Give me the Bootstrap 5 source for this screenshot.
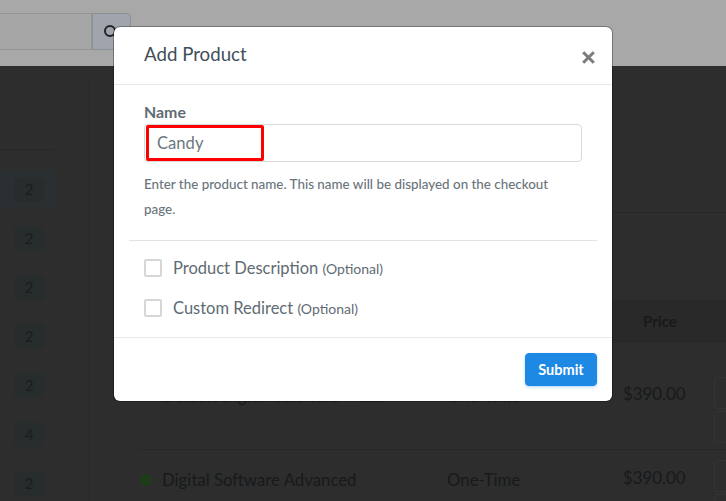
<!DOCTYPE html>
<html lang="en">
<head>
<meta charset="utf-8">
<title>Add Product</title>
<link href="https://cdn.jsdelivr.net/npm/bootstrap@5.3.0/dist/css/bootstrap.min.css" rel="stylesheet">
<style>
html, body { height: 501px; overflow: hidden; }
body { background: #2d2d2d; font-family: "Lato", "Open Sans", sans-serif; color: #171a1c; position: relative; }
.topbar { height: 66px; background: #a8a8a8; padding-top: 13px; }
.topsearch { width: 131px; height: 37px; }
.topfield { flex: 1; border: 1px solid #959595; border-left: 0; background: #a6a6a6; }
.topbtn { width: 39px; border: 1px solid #8b8f96; border-radius: 0 4px 4px 0; background: #a0a4ad; padding: 11px 0 0 11px; }
.shell { height: 435px; }
.side { width: 90px; border-right: 1px solid #272727; padding-top: 69px; margin-top: 14px; height: 421px; flex: none; }
.siderule { width: 54px; border-top: 1px solid #272727; }
.siderow { width: 54px; height: 49px; padding: 7px 0 0 14px; margin-top: 0; }
.siderow.on { background: #2a3032; height: 39px; margin-top: 20px; padding-top: 7px; margin-bottom: 10px; }
.count { display: flex; align-items: center; justify-content: center; width: 30px; height: 25px; border-radius: 5px; background: #272c2d; color: #1a1d1f; font-size: 15px; }
.main { flex: 1; padding-top: 146px; min-width: 0; }
.mainrule { border-top: 1px solid #272727; margin-left: 520px; }
.thead { height: 43px; margin-top: 87px; margin-left: 50px; background: #292929; padding-left: 503px; display: flex; align-items: center; font-weight: 700; font-size: 15px; }
.prow { margin-left: 50px; height: 107px; border-bottom: 1px solid #272727; font-size: 16.8px; display: flex; position: relative; }
.prow.second { height: 60px; border: 0; }
.dotmark { width: 12px; height: 12px; border-radius: 50%; background: #1c3d18; flex: none; margin-right: 10px; }
.pname { width: 307px; flex: none; display: flex; align-items: center; white-space: nowrap; }
.ptype { width: 176px; flex: none; }
.pprice { width: 91px; flex: none; padding-bottom: 4px; }
.pbtns { display: flex; flex-direction: column; gap: 2px; padding-top: 34px; }
.second .pbtns { padding-top: 10px; }
.pbtns span { flex: none; width: 30px; height: 32px; border: 1px solid #343434; border-right: 0; border-radius: 4px 0 0 4px; }
.dialog { position: absolute; left: 114px; top: 27px; width: 498px; height: 374px; background: #fff; border-radius: 6px; border: 0; box-shadow: 0 0 0 1px rgba(0,0,0,.3); display: flex; flex-direction: column; color: #5f6b73; }
.dialog .modal-header { height: 58px; padding: 0 15px 0 30px; border-bottom: 1px solid #e9e9e9; flex: none; }
.dialog .modal-title { font-size: 18.7px; font-weight: 400; color: #3f4f59; line-height: 1; margin: 0 0 2px; }
.xclose { background: none; border: 0; padding: 0; margin: 3px 2px 0 0; line-height: 0; }
.dialog .modal-body { padding: 0 15px; flex: 1; }
.fieldname { display: block; font-size: 15.9px; font-weight: 700; color: #5f6b73; margin: 17px 0 2px 15px; line-height: 20px; }
.fieldwrap { margin-left: 15px; width: 438px; position: relative; }
.dialog .form-control { height: 38px; padding: 0 12px; background: #fff; border: 1px solid #d9d9d9; border-radius: 4px; font-size: 16.6px; color: #6c7780; box-shadow: none; font-family: inherit; }
.redbox { position: absolute; left: 2px; top: 1px; width: 118px; height: 36px; border: 3px solid #f00; border-radius: 2px; pointer-events: none; }
.fieldhelp { font-size: 13.4px; line-height: 25px; margin: 10px 0 18px 15px; color: #6a747b; width: 420px; font-weight: 500; }
.fieldline { margin: 0; border: 0; border-top: 1px solid #e3e3e3; opacity: 1; }
.optrow { display: flex; align-items: center; margin: 0 0 0 15px; height: 18px; gap: 11px; font-size: 16.5px; color: #5f6b73; }
.fieldline + .optrow { margin-top: 18px; }
.optrow + .optrow { margin-top: 22px; }
.optrow .form-check-input { width: 18px; height: 18px; margin: 0; background-color: #fff; border: 2px solid #d6d6d6; border-radius: 2px; flex: none; }
.optrow small { font-size: 14px; }
.dialog .modal-footer { height: 64px; padding: 0 15px; border-top: 1px solid #e9e9e9; flex: none; display: flex; justify-content: flex-end; align-items: flex-start; }
.dialog .btn-primary { margin: 15px 0 0; width: 72px; height: 33px; padding: 0; background: #1e88e5; border-color: #1e88e5; font-size: 14.5px; font-weight: 700; border-radius: 4px; box-shadow: 0 1px 3px rgba(30,136,229,.35); }
</style>
</head>
<body>
<div class="topbar">
  <div class="topsearch d-flex">
    <div class="topfield"></div>
    <div class="topbtn"><svg class="d-block" width="16" height="16" viewBox="0 0 16 16" fill="none" stroke="#222" stroke-width="2"><circle cx="6" cy="6" r="5"/><path d="M10 10 15 15"/></svg></div>
  </div>
</div>
<div class="shell d-flex">
  <aside class="side">
    <div class="siderule"></div>
    <div class="siderow on"><span class="count">2</span></div>
    <div class="siderow"><span class="count">2</span></div>
    <div class="siderow"><span class="count">2</span></div>
    <div class="siderow"><span class="count">2</span></div>
    <div class="siderow"><span class="count">2</span></div>
    <div class="siderow"><span class="count">4</span></div>
    <div class="siderow"><span class="count">2</span></div>
  </aside>
  <main class="main">
    <div class="mainrule"></div>
    <div class="thead">Price</div>
    <div class="prow">
      <div class="pname"><span class="dotmark"></span>Default Digital Software Multi</div>
      <div class="ptype d-flex align-items-center">One-Time</div>
      <div class="pprice d-flex align-items-center">$390.00</div>
      <div class="pbtns"><span></span><span></span></div>
    </div>
    <div class="prow second">
      <div class="pname"><span class="dotmark"></span>Digital Software Advanced</div>
      <div class="ptype d-flex align-items-center">One-Time</div>
      <div class="pprice d-flex align-items-center">$390.00</div>
      <div class="pbtns"><span></span><span></span></div>
    </div>
  </main>
</div>
<div class="modal-content dialog">
  <div class="modal-header d-flex justify-content-between align-items-center">
    <h5 class="modal-title">Add Product</h5>
    <button class="xclose" type="button" aria-label="Close"><svg width="13" height="13" viewBox="0 0 13 13" stroke="#7c7c7c" stroke-width="3"><path d="M1.2 1.2 11.8 11.8M11.8 1.2 1.2 11.8"/></svg></button>
  </div>
  <div class="modal-body">
    <label class="fieldname" for="pn">Name</label>
    <div class="fieldwrap">
      <input id="pn" class="form-control" type="text" value="Candy">
      <div class="redbox"></div>
    </div>
    <p class="fieldhelp">Enter the product name. This name will be displayed on the checkout page.</p>
    <hr class="fieldline">
    <label class="optrow"><input class="form-check-input" type="checkbox"><span>Product Description <small>(Optional)</small></span></label>
    <label class="optrow"><input class="form-check-input" type="checkbox"><span>Custom Redirect <small>(Optional)</small></span></label>
  </div>
  <div class="modal-footer">
    <button class="btn btn-primary" type="button">Submit</button>
  </div>
</div>
<script src="https://cdn.jsdelivr.net/npm/bootstrap@5.3.0/dist/js/bootstrap.bundle.min.js"></script>
</body>
</html>
